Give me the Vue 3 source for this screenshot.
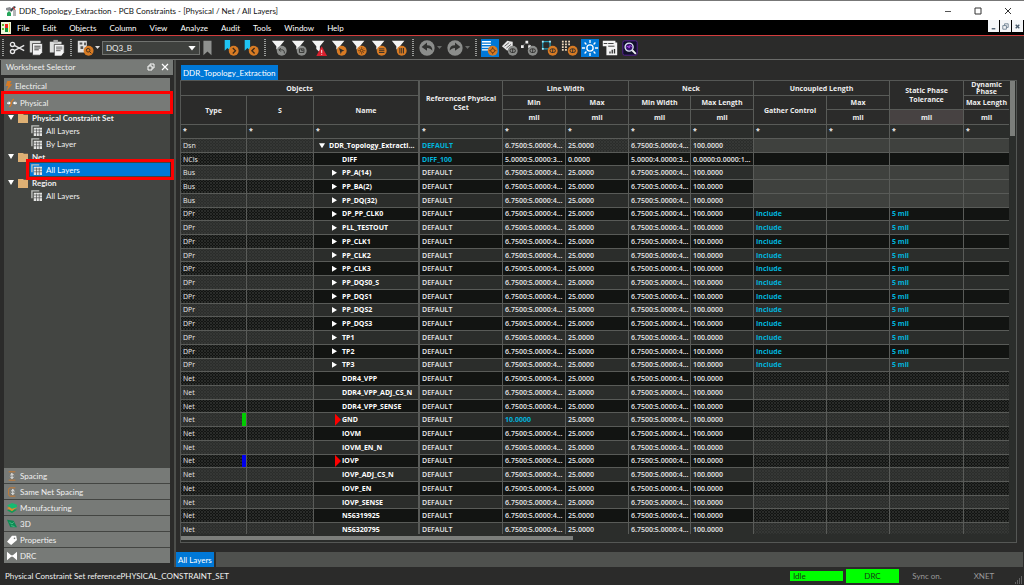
<script setup>
import { ref } from 'vue'

const menus = ['File', 'Edit', 'Objects', 'Column', 'View', 'Analyze', 'Audit', 'Tools', 'Window', 'Help']
const filters = ['undo', 'save', 'warn', 'cursor', 'gear', 'rows', 'cols']
const selected = ref('DQ3_B')

const tree = [
  { name: 'Physical Constraint Set', items: ['All Layers', 'By Layer'] },
  { name: 'Net', items: ['All Layers'], active: 0 },
  { name: 'Region', items: ['All Layers'] },
]
const sections = [
  { name: 'Spacing', icon: 'spacing' },
  { name: 'Same Net Spacing', icon: 'same' },
  { name: 'Manufacturing', icon: 'layers' },
  { name: '3D', icon: 'cube' },
  { name: 'Properties', icon: 'label' },
  { name: 'DRC', icon: 'bowtie' },
]

const columns = [66, 67, 105, 84, 63, 63, 62, 63, 73, 63, 74, 46]
const W = '6.7500:5.0000:4...'
const base = { cset: 'DEFAULT', lw: W, lmax: '25.0000', nw: W, nl: '100.0000' }
const pairs = ['DP_PP_CLK0', 'PLL_TESTOUT', 'PP_CLK1', 'PP_CLK2', 'PP_CLK3', 'PP_DQS0_S', 'PP_DQS1', 'PP_DQS2', 'PP_DQS3', 'TP1', 'TP2', 'TP3']
const nets = ['DDR4_VPP', 'DDR4_VPP_ADJ_CS_N', 'DDR4_VPP_SENSE', 'GND', 'IOVM', 'IOVM_EN_N', 'IOVP', 'IOVP_ADJ_CS_N', 'IOVP_EN', 'IOVP_SENSE', 'N56319925', 'N56320795']
const netExtras = {
  GND: { mark: 'green', flag: true, lw: '10.0000', lwBlue: true },
  IOVP: { mark: 'blue', flag: true },
}
const rows = [
  { ...base, type: 'Dsn', name: 'DDR_Topology_Extracti...', root: true, csetBlue: true, tail: 'grey', hatchWidth: true },
  { ...base, type: 'NCls', name: 'DIFF', cset: 'DIFF_100', csetBlue: true, lw: '5.0000:5.0000:3...', lmax: '0.0000', nw: '5.0000:4.0000:3...', nl: '0.0000:0.0000:1...', tail: '' },
  ...['PP_A(14)', 'PP_BA(2)', 'PP_DQ(32)'].map((name) => ({ ...base, type: 'Bus', name, arrow: true, tail: 'grey' })),
  ...pairs.map((name) => ({ ...base, type: 'DPr', name, arrow: true, gather: 'Include', tol: '5 mil', tail: '' })),
  ...nets.map((name) => ({ ...base, type: 'Net', name, tail: 'hatch', ...netExtras[name] })),
]
</script>

<template>
  <div class="app">
    <svg class="defs" aria-hidden="true">
      <symbol id="funnel" viewBox="0 0 20 20"><path d="M2 2h14l-5 6v7l-4-4V8z" fill="#f4f4f4" /></symbol>
      <symbol id="toggle" viewBox="0 0 20 20"><circle cx="13" cy="13" r="5.500" /><rect x="10" y="11" width="6" height="4" rx="2" fill="none" stroke="#2b2b2a" /><path d="M13 11v4" stroke="#2b2b2a" /></symbol>
      <symbol id="sheet" viewBox="0 0 12 12"><path d="M1 9V1h8" fill="none" stroke="#bfc1be" stroke-width="1.500" /><path d="M3 3h9v9H3z" fill="#e4e5e3" /><path d="M3 5.500h9M3 8.500h9M6 4v8M9 4v8" stroke="#555" stroke-width=".8" /></symbol>
      <symbol id="mark" viewBox="0 0 20 20"><path d="M3 1h6v12L6 10l-3 3z" fill="#1fc4f4" /></symbol>
      <symbol id="back" viewBox="0 0 20 20"><circle cx="10" cy="10" r="8.500" fill="#8b8d8b" /><path d="M4 9l6-5v3c4 0 6 2 6 6-2-2-3-3-6-3v3z" fill="#30312f" /></symbol>
    </svg>

    <header class="title">
      <svg class="logo" viewBox="0 0 12 12"><path d="M1 3l4-1 2 2-3 2-3-1z" fill="#8a8d91" /><path d="M5 5l4-4 2 1-5 5z" fill="#37474f" /><path d="M2 8l2-2 2 2v3H2z" fill="#26a65b" /><path d="M8 5h3v6H8z" fill="#b5b7b9" /><path d="M8 2l2 3" stroke="#e33" /></svg>
      <h1>DDR_Topology_Extraction - PCB Constraints - [Physical / Net / All Layers]</h1>
      <div class="window-buttons">
        <button aria-label="Minimize"><svg viewBox="0 0 10 10"><path d="M2 5.500h6" stroke="#555" /></svg></button>
        <button aria-label="Maximize"><svg viewBox="0 0 10 10"><path d="M2 2h6v6H2z" fill="none" stroke="#333" /></svg></button>
        <button aria-label="Close"><svg viewBox="0 0 10 10"><path d="M2 2l6 6M8 2L2 8" stroke="#333" /></svg></button>
      </div>
    </header>

    <nav class="menu">
      <svg class="menu-logo" viewBox="0 0 10 12"><path d="M0 0h10v12H0z" fill="#eef6d8" /><path d="M1 2h2v2H1zM1 6h2v2H1z" fill="#65b82e" /><path d="M4 2h3v4H4z" fill="#e22" /><path d="M4 6h3v4H4z" fill="#11933d" /><path d="M8 1h1v9H8z" fill="#e8d23a" /></svg>
      <button v-for="m in menus" :key="m">{{ m }}</button>
      <div class="child-buttons">
        <button aria-label="Minimize sheet"><svg viewBox="0 0 10 10"><path d="M3 7.500h4" stroke="#46596b" stroke-width="1.500" /></svg></button>
        <button aria-label="Restore sheet"><svg viewBox="0 0 10 10"><path d="M4 4V2h4v4H6M2 4h4v4H2z" fill="none" stroke="#6c7f90" /></svg></button>
        <button aria-label="Close sheet"><svg viewBox="0 0 10 10"><path d="M3 3l4 4M7 3L3 7" stroke="#46596b" stroke-width="1.500" /></svg></button>
      </div>
    </nav>

    <div class="toolbar" role="toolbar">
      <i class="grip"></i>
      <button class="tool" aria-label="Cut"><svg viewBox="0 0 20 20" fill="none" stroke="#e8e8e8" stroke-width="1.500"><circle cx="5" cy="6" r="2.300" /><circle cx="5" cy="14" r="2.300" /><path d="M7 7l11 6M7 13l11-6" /></svg></button>
      <button class="tool" aria-label="Copy"><svg viewBox="0 0 20 20"><path d="M2 2h12v13H2z" fill="#d8d9d8" /><path d="M5 5h11v10l-3 3H5z" fill="#f4f4f4" stroke="#2b2b2a" stroke-width=".8" /><path d="M7 8h7M7 10h7M7 12h5" stroke="#333" /></svg></button>
      <button class="tool" aria-label="Paste"><svg viewBox="0 0 20 20"><path d="M2 3h13v12H2z" fill="#dedfde" /><path d="M6 1h5v3H6z" fill="#aaa" /><path d="M7 6h11v9l-3 4H7z" fill="#f6f6f6" stroke="#2b2b2a" stroke-width=".8" /><path d="M9 9h7M9 11h7M9 13h5" stroke="#555" /></svg></button>
      <i class="grip"></i>
      <button class="tool" aria-label="Find"><svg viewBox="0 0 20 20"><path d="M2 2h10v13H2z" fill="#e2e2e2" /><path d="M4 4h3v2H4zM9 4h2v3H9zM5 8h3v3H5z" fill="#555" /><circle cx="14" cy="13" r="5.500" fill="#d87b24" /><circle cx="13.500" cy="12.500" r="2" fill="none" stroke="#3c2a18" /><path d="M15 14l2 2" stroke="#3c2a18" /></svg></button>
      <i class="caret"></i>
      <label class="combo"><select v-model="selected" aria-label="Net filter"><option>DQ3_B</option></select></label>
      <button class="tool slim" aria-label="Bookmark"><svg viewBox="0 0 12 20"><path d="M2 2h9v16l-4.500-4L2 18z" fill="#8f918f" /></svg></button>
      <button class="tool next" aria-label="Next bookmark"><svg viewBox="0 0 20 20"><use href="#mark" /><circle cx="13" cy="13" r="5.500" fill="#d87b24" /><path d="M12 10l3 3-3 3" fill="none" stroke="#3c2a18" stroke-width="1.500" /></svg></button>
      <button class="tool" aria-label="Previous bookmark"><svg viewBox="0 0 20 20"><use href="#mark" /><circle cx="13" cy="13" r="5.500" fill="#d87b24" /><path d="M14 10l-3 3 3 3" fill="none" stroke="#3c2a18" stroke-width="1.500" /></svg></button>
      <i class="grip"></i>
      <button v-for="f in filters" :key="f" class="tool" :aria-label="'Filter ' + f">
        <svg viewBox="0 0 20 20">
          <use href="#funnel" />
          <path v-if="f === 'warn'" d="M13 8l6 11H7z" fill="#d9202e" />
          <circle v-else cx="13" cy="13" r="5.500" :fill="f === 'undo' || f === 'save' ? '#8b8d8b' : '#d87b24'" />
          <path v-if="f === 'undo'" d="M10 12h3c2 0 3 1 3 4M12 10l-2 2 2 2" fill="none" stroke="#30312f" />
          <path v-if="f === 'save'" d="M10.500 11h5v4h-5zM13 11v2h2" fill="none" stroke="#30312f" />
          <path v-if="f === 'warn'" d="M13 12v3.500M13 16.500v1" stroke="#fff" />
          <path v-if="f === 'cursor'" d="M10 10l6 3-3 1-1 3z" fill="#2b2b2a" />
          <g v-if="f === 'gear'" fill="none" stroke="#5d3410"><circle cx="13" cy="13" r="1.500" /><path d="M13 9v2M13 15v2M9 13h2M15 13h2M10.500 10.500l1 1M14.500 14.500l1 1M15.500 10.500l-1 1M11.500 14.500l-1 1" stroke-width=".8" /></g>
          <path v-if="f === 'rows'" d="M10 11h6M10 13h6M10 15h6" stroke="#2b2b2a" />
          <path v-if="f === 'cols'" d="M11 10v6M13 10v6M15 10v6" stroke="#2b2b2a" />
        </svg>
      </button>
      <i class="grip"></i>
      <button class="tool" aria-label="Undo"><svg viewBox="0 0 20 20"><use href="#back" /></svg></button>
      <i class="caret dim"></i>
      <button class="tool redo" aria-label="Redo"><svg class="flip" viewBox="0 0 20 20"><use href="#back" /></svg></button>
      <i class="caret dim"></i>
      <i class="grip"></i>
      <button class="tool on" aria-label="Worksheet options"><svg viewBox="0 0 20 20"><path d="M1 3h10M1 6h10M1 9h9M1 12h7" stroke="#fff" stroke-width="1.500" /><circle cx="13" cy="13" r="5.500" fill="#d87b24" /><circle cx="13" cy="13" r="2.200" fill="none" stroke="#6b3c12" /><path d="M13 9v2M13 15v2M9 13h2M15 13h2" stroke="#6b3c12" /></svg></button>
      <button class="tool" aria-label="Toggle tags"><svg viewBox="0 0 20 20"><path d="M1 8l6-6 6 1v4l-6 6z" fill="#e8e8e8" /><path d="M4 8l5-4M6 10l5-4" stroke="#555" /><use href="#toggle" fill="#8b8d8b" /></svg></button>
      <button class="tool" aria-label="Toggle nodes"><svg viewBox="0 0 20 20"><path d="M2 8l4-5 4 4" fill="none" stroke="#aaa" stroke-width=".8" stroke-dasharray="1 1" /><path d="M0 7h3v3H0zM5 2h3v3H5zM8 7h3v3H8z" fill="#eee" /><use href="#toggle" fill="#8b8d8b" /></svg></button>
      <button class="tool" aria-label="Toggle region"><svg viewBox="0 0 20 20"><path d="M2 3h8v8H2z" fill="none" stroke="#25c5e8" /><path d="M1 2h2v2H1zM9 2h2v2H9zM1 10h2v2H1z" fill="#aeeeff" /><use href="#toggle" fill="#d87b24" /></svg></button>
      <button class="tool" aria-label="Toggle list"><svg viewBox="0 0 20 20"><path d="M2 2v11M5.500 2v11M9 2v6" stroke="#eed9bd" stroke-width="2" stroke-dasharray="2 1" /><use href="#toggle" fill="#d87b24" /></svg></button>
      <button class="tool on" aria-label="Highlight"><svg viewBox="0 0 20 20" fill="none" stroke="#fff" stroke-width="1.500"><circle cx="10" cy="10" r="3.500" /><path d="M10 1v3.500M10 15.500V19M1 10h3.500M15.500 10H19M4 4l2 2M14 14l2 2M16 4l-2 2M6 14l-2 2" /></svg></button>
      <button class="tool" aria-label="Report"><svg viewBox="0 0 20 20"><path d="M2 2h14v2h2v14H6V8H2z" fill="#f4f4f4" /><path d="M3 5h4M8 5h6M8 8h7" stroke="#333" /><path d="M10 16v-2M12.500 16v-4M15 16v-5" stroke="#333" stroke-width="1.500" /></svg></button>
      <button class="tool" aria-label="Inspect"><svg viewBox="0 0 20 20"><rect x="2" y="2" width="16" height="16" rx="2" fill="#10102a" stroke="#5a1f9a" /><circle cx="9" cy="9" r="4.500" fill="#35126b" stroke="#dfe8f4" stroke-width="1.500" /><path d="M6 9l2-1 1 2 1-3 2 2" fill="none" stroke="#b04cf0" /><path d="M12.500 12.500l4 4" stroke="#f4f4f4" stroke-width="2" /></svg></button>
    </div>

    <div class="work">
      <aside class="selector">
        <div class="panel-head">
          <h2>Worksheet Selector</h2>
          <button aria-label="Float panel"><svg viewBox="0 0 10 10"><path d="M4 4V2h4v4H6M2 4h4v4H2z" fill="none" stroke="#fff" /></svg></button>
          <button aria-label="Close panel"><svg viewBox="0 0 10 10"><path d="M2 2l6 6M8 2L2 8" stroke="#fff" stroke-width="1.200" /></svg></button>
        </div>
        <div class="panel-body">
          <button class="section electrical"><svg viewBox="0 0 10 12"><path d="M3 0h5L6 4h3L2 12l2-6H1z" fill="#d87b24" /></svg>Electrical</button>
          <button class="section physical marked"><svg viewBox="0 0 12 12"><path d="M0 6h4M8 6h4" stroke="#fff" stroke-width="1.500" /><path d="M2 4l3 2-3 2zM10 4L7 6l3 2z" fill="#fff" /><path d="M8 1L5 5v3l-2 3" fill="none" stroke="#d87b24" stroke-width="1.500" /></svg>Physical</button>
          <ul class="tree">
            <li v-for="g in tree" :key="g.name">
              <div class="group"><i class="open"></i><svg viewBox="0 0 11 11"><path d="M0 1h6v1h5v9H0z" fill="#deb074" /></svg>{{ g.name }}</div>
              <ul>
                <li v-for="(s, i) in g.items" :key="s"><a href="#" class="leaf" :class="{ active: g.active === i }"><svg viewBox="0 0 12 12"><use href="#sheet" /></svg>{{ s }}</a></li>
              </ul>
            </li>
          </ul>
          <div class="stack">
            <button v-for="s in sections" :key="s.name" class="section">
              <svg viewBox="0 0 12 12">
                <g v-if="s.icon === 'spacing'"><path d="M2 1h8M2 11h8" stroke="#d87b24" /><path d="M6 3v6M4 5l2-2 2 2M4 7l2 2 2-2" fill="none" stroke="#fff" /></g>
                <g v-if="s.icon === 'same'"><path d="M10 1H4Q2 1 2 3v6q0 2 2 2h6" fill="none" stroke="#d87b24" /><path d="M7 3v6M5 5l2-2 2 2M5 7l2 2 2-2" fill="none" stroke="#fff" /></g>
                <g v-if="s.icon === 'layers'"><path d="M0 9l5-2 7 1-6 4z" fill="#129957" /><path d="M0 6l5-2 7 1-6 5z" fill="#e08b2c" /><path d="M0 3l6-3 6 2v3L6 7z" fill="#16bb72" /></g>
                <g v-if="s.icon === 'cube'"><path d="M0 1l8 1 4 8H4z" fill="#0e8b54" /><path d="M3 4l3 2 2-2M5 8l4 1" fill="none" stroke="#66d49f" stroke-width=".8" /></g>
                <path v-if="s.icon === 'label'" fill-rule="evenodd" d="M0 8l6-7 5 0 1 5-7 6zM9 3a1 1 0 100 2 1 1 0 000-2z" fill="#fff" />
                <path v-if="s.icon === 'bowtie'" d="M0 1l5 4h2l5-4v10L7 7H5l-5 4z" fill="#fff" />
              </svg>{{ s.name }}
            </button>
          </div>
        </div>
      </aside>

      <main class="main">
        <button class="tab top">DDR_Topology_Extraction</button>
        <div class="frame">
          <div class="grid-wrap">
            <table>
              <colgroup><col v-for="(c, i) in columns" :key="i" :style="{ width: c + 'px' }" /></colgroup>
              <thead>
                <tr class="first">
                  <th colspan="3">Objects</th>
                  <th rowspan="3" class="lead">Referenced Physical CSet</th>
                  <th colspan="2">Line Width</th>
                  <th colspan="2">Neck</th>
                  <th colspan="2">Uncoupled Length</th>
                  <th rowspan="2">Static Phase Tolerance</th>
                  <th class="tight">Dynamic Phase</th>
                </tr>
                <tr>
                  <th rowspan="2">Type</th><th rowspan="2">S</th><th rowspan="2">Name</th>
                  <th>Min</th><th>Max</th><th>Min Width</th><th>Max Length</th>
                  <th rowspan="2">Gather Control</th><th>Max</th><th>Max Length</th>
                </tr>
                <tr class="units">
                  <th>mil</th><th>mil</th><th>mil</th><th>mil</th><th>mil</th><th class="warm">mil</th><th>mil</th>
                </tr>
                <tr class="filter"><td v-for="(c, i) in columns" :key="i" :class="{ lead: i === 3 }">*</td></tr>
              </thead>
              <tbody>
                <tr v-for="(r, i) in rows" :key="i" :class="{ dark: i % 2 }">
                  <td class="hatch type">{{ r.type }}<i v-if="r.mark" class="mark" :class="r.mark"></i></td>
                  <td class="hatch"></td>
                  <td class="name" :class="{ root: r.root }"><i v-if="r.root" class="open"></i><i v-if="r.arrow" class="closed"></i><i v-if="r.flag" class="flag"></i>{{ r.name }}</td>
                  <td class="lead" :class="{ blue: r.csetBlue }">{{ r.cset }}</td>
                  <td :class="{ hatch: r.hatchWidth, blue: r.lwBlue }">{{ r.lw }}</td>
                  <td :class="{ hatch: r.hatchWidth }">{{ r.lmax }}</td>
                  <td :class="{ hatch: r.hatchWidth }">{{ r.nw }}</td>
                  <td :class="{ hatch: r.hatchWidth }">{{ r.nl }}</td>
                  <td class="blue" :class="r.tail">{{ r.gather }}</td>
                  <td :class="r.tail"></td>
                  <td class="blue" :class="r.tail">{{ r.tol }}</td>
                  <td :class="r.tail"></td>
                </tr>
              </tbody>
            </table>
          </div>
          <div class="vbar"><i></i></div>
          <div class="hbar"><i></i></div>
        </div>
        <div class="tabs"><button class="tab">All Layers</button><span class="strip"></span></div>
      </main>
    </div>

    <footer class="status">
      <span class="message">Physical Constraint Set referencePHYSICAL_CONSTRAINT_SET</span>
      <span class="idle">Idle</span>
      <span class="drc">DRC</span>
      <span class="sync">Sync on.</span>
      <span class="xnet">XNET</span>
      <svg viewBox="0 0 8 8"><path d="M6 1h1M4 3h1M6 3h1M2 5h1M4 5h1M6 5h1M0 7h1M2 7h1M4 7h1M6 7h1" stroke="#999" /></svg>
    </footer>
  </div>
</template>

<style>
html, body { margin: 0; background: #2b2b2a; }
</style>

<style scoped>
* { box-sizing: border-box; }
.app { height: 100vh; display: flex; flex-direction: column; overflow: hidden; background: #2b2b2a; color: #f0f0f0; font: 8px/10px Lato, "Open Sans", sans-serif; }
.defs { position: absolute; width: 0; height: 0; }
button { font: inherit; color: inherit; background: none; border: 0; padding: 0; margin: 0; }
h1, h2 { font: inherit; margin: 0; }
ul { list-style: none; margin: 0; padding: 0; }
svg { display: block; flex: none; }
i { display: block; flex: none; }

.title { flex: none; height: 20px; background: #fff; color: #111; border-top: 1px solid #777; display: flex; align-items: center; padding-left: 5px; }
.logo { width: 12px; height: 12px; margin-right: 2px; }
.window-buttons { margin-left: auto; display: flex; padding-right: 1px; }
.window-buttons button { width: 30px; display: flex; justify-content: center; }
.window-buttons svg { width: 10px; height: 10px; }

.menu { flex: none; height: 16px; background: #000; color: #fff; border-bottom: 1px solid #d23c3c; display: flex; align-items: center; gap: 13px; }
.menu-logo { width: 10px; height: 12px; margin-right: -7px; margin-left: 1px; }
.child-buttons { margin-left: auto; display: flex; gap: 1px; align-self: flex-start; padding-right: 1px; }
.child-buttons button { width: 11px; height: 12px; background: #f4f6f8; display: grid; place-items: center; }
.child-buttons svg { width: 9px; height: 9px; }

.toolbar { flex: none; height: 24px; display: flex; align-items: center; padding-left: 2px; border-bottom: 1px solid #6a6b69; }
.tool { width: 20px; height: 18px; display: grid; place-items: center; flex: none; }
.tool svg { width: 18px; height: 18px; }
.tool.slim { width: 12px; }
.tool.slim svg { width: 12px; }
.tool.next { margin-left: 8px; }
.tool.redo { margin-left: 1px; }
.tool.on { background: #0078d7; background-clip: content-box; padding: 0 1px; }
.flip { transform: scaleX(-1); }
.grip { width: 2px; height: 18px; margin: 0 3px; background: repeating-linear-gradient(#999b99 0 1px, transparent 1px 2px); }
.grip:first-child { margin-left: 0; }
.caret { width: 5px; height: 3px; background: #ddd; clip-path: polygon(0 0, 100% 0, 50% 100%); margin: 0 1px 0 0; }
.caret.dim { background: #6b6d6b; margin-right: 2px; }
.combo { width: 98px; height: 14px; margin: 0 1px; position: relative; flex: none; display: flex; }
.combo select { appearance: none; width: 100%; border: 1px solid #70726f; background: #3f413e; color: #eee; font: inherit; padding: 0 3px; border-radius: 0; }
.combo::after { content: ""; position: absolute; right: 4px; top: 5px; width: 8px; height: 5px; background: #fff; clip-path: polygon(0 0, 100% 0, 50% 100%); pointer-events: none; }

.work { flex: 1; min-height: 0; display: flex; }
.selector { width: 176px; flex: none; display: flex; flex-direction: column; padding-left: 1px; border-right: 2px solid #4c4e4b; }
.panel-head { height: 15px; margin-right: 1px; background: #777a77; display: flex; align-items: center; padding: 0 3px 1px 5px; gap: 4px; }
.panel-head h2 { flex: 1; }
.panel-head svg { width: 10px; height: 10px; }
.panel-body { flex: 1; min-height: 0; margin: 3px 4px 4px 3px; display: flex; flex-direction: column; background: #434542; }
.section { display: flex; align-items: center; height: 15px; background: #777a77; padding-left: 3px; gap: 3px; width: 100%; flex: none; }
.section svg { width: 10px; height: 10px; }
.electrical { gap: 1px; padding-left: 0; }
.physical { height: 17px; margin-top: 1px; }
.marked { position: relative; box-shadow: 0 0 0 3px #f00; }
.tree { flex: 1; color: #f0f0f0; }
.group, .leaf { display: flex; align-items: center; height: 13px; }
.group { font-weight: 700; padding-left: 4px; }
.group svg { width: 10px; height: 10px; margin: 0 4px; }
.open { width: 6px; height: 5px; background: #fff; clip-path: polygon(0 0, 100% 0, 50% 100%); }
.leaf { color: inherit; text-decoration: none; margin-left: 26px; padding-left: 1px; gap: 4px; }
.leaf svg { width: 11px; height: 11px; }
.leaf.active { background: #0078d7; position: relative; color: #fff; }
.leaf.active::after { content: ""; position: absolute; inset: -4px -4px; border: 3px solid #f00; }
.stack { display: flex; flex-direction: column; gap: 1px; }

.main { flex: 1; min-width: 0; display: flex; flex-direction: column; padding-top: 5px; }
.tab { background: #0078d7; color: #fff; height: 15px; padding: 0 2px; flex: none; }
.tab.top { align-self: flex-start; margin-left: 5px; }
.frame { flex: 1; min-height: 0; margin: 0 7px 9px 4px; border: 1px solid #555755; display: grid; grid-template-columns: 1fr 7px; grid-template-rows: 1fr 8px; }
.grid-wrap { overflow: hidden; min-height: 0; min-width: 0; position: relative; }
table { width: 100%; height: calc(100% + 3px); table-layout: fixed; border-collapse: separate; border-spacing: 0; font: 7px/9px "Open Sans", "Noto Sans", sans-serif; }
th, td { padding: 0 0 0 2px; border-right: 1px solid #595b58; border-bottom: 1px solid #595b58; overflow: hidden; white-space: nowrap; text-align: left; }
th { text-align: center; font-weight: 700; white-space: normal; padding: 0 1px; color: #eee; height: 14px; }
.first th, .units th { height: 15px; }
.lead { border-left: 1px solid #595b58; }
.first .tight { line-height: 7px; overflow: visible; }
.warm { background: #474242; }
.filter td { height: 14px; background: #2b2d2b; vertical-align: top; line-height: 12px; font-weight: 700; }
tbody tr { background: #2b2d2b; --weave: #353735; }
tbody tr.dark { background: #121412; --weave: #292b29; }
tbody td { font-weight: 600; color: #e8e8e8; }
.hatch { background: linear-gradient(45deg, transparent 40%, var(--weave) 40% 60%, transparent 60%) 0 0 / 3px 3px, linear-gradient(-45deg, transparent 40%, var(--weave) 40% 60%, transparent 60%) 0 0 / 3px 3px; }
.grey { background: #3f413e; }
td.blue { color: #00b4dc; font-weight: 700; }
td.type { position: relative; font-weight: 500; }
.mark { position: absolute; right: 0; top: 0; bottom: 0; width: 4px; }
.mark.green { background: #0c0; }
.mark.blue { background: #00e; }
td.name { position: relative; padding-left: 28px; font-weight: 700; color: #fff; }
td.name.root { padding-left: 15px; }
.name i { position: absolute; top: 50%; }
.name .open { left: 5px; margin-top: -2px; }
.closed { left: 18px; width: 5px; height: 6px; margin-top: -3px; background: #fff; clip-path: polygon(0 0, 100% 50%, 0 100%); }
.flag { left: 21px; width: 6px; height: 12px; margin-top: -6px; background: #f00; clip-path: polygon(0 0, 100% 50%, 0 100%); }
.vbar { background: #2b2d2b; padding: 0 1px; }
.vbar i { height: 55px; background: #7c7e7b; }
.hbar { grid-column: 1 / -1; padding-top: 2px; background: #2b2d2b; }
.hbar i { width: 47%; height: 4px; background: #7c7e7b; }
.tabs { display: flex; gap: 2px; flex: none; }
.strip { flex: 1; background: #4f514e; margin-right: 1px; }

.status { flex: none; height: 18px; display: flex; align-items: center; padding-left: 5px; }
.message { flex: 1; }
.idle { width: 53px; height: 10px; padding-left: 3px; background: #0f0; color: #143c14; margin-right: 3px; }
.drc { width: 53px; height: 14px; line-height: 14px; text-align: center; background: #0f0; color: #143c14; }
.sync, .xnet { color: #999; text-align: center; }
.sync { width: 56px; }
.xnet { width: 58px; }
.status svg { width: 8px; height: 8px; align-self: flex-end; margin: 0 1px 1px 2px; }
</style>
